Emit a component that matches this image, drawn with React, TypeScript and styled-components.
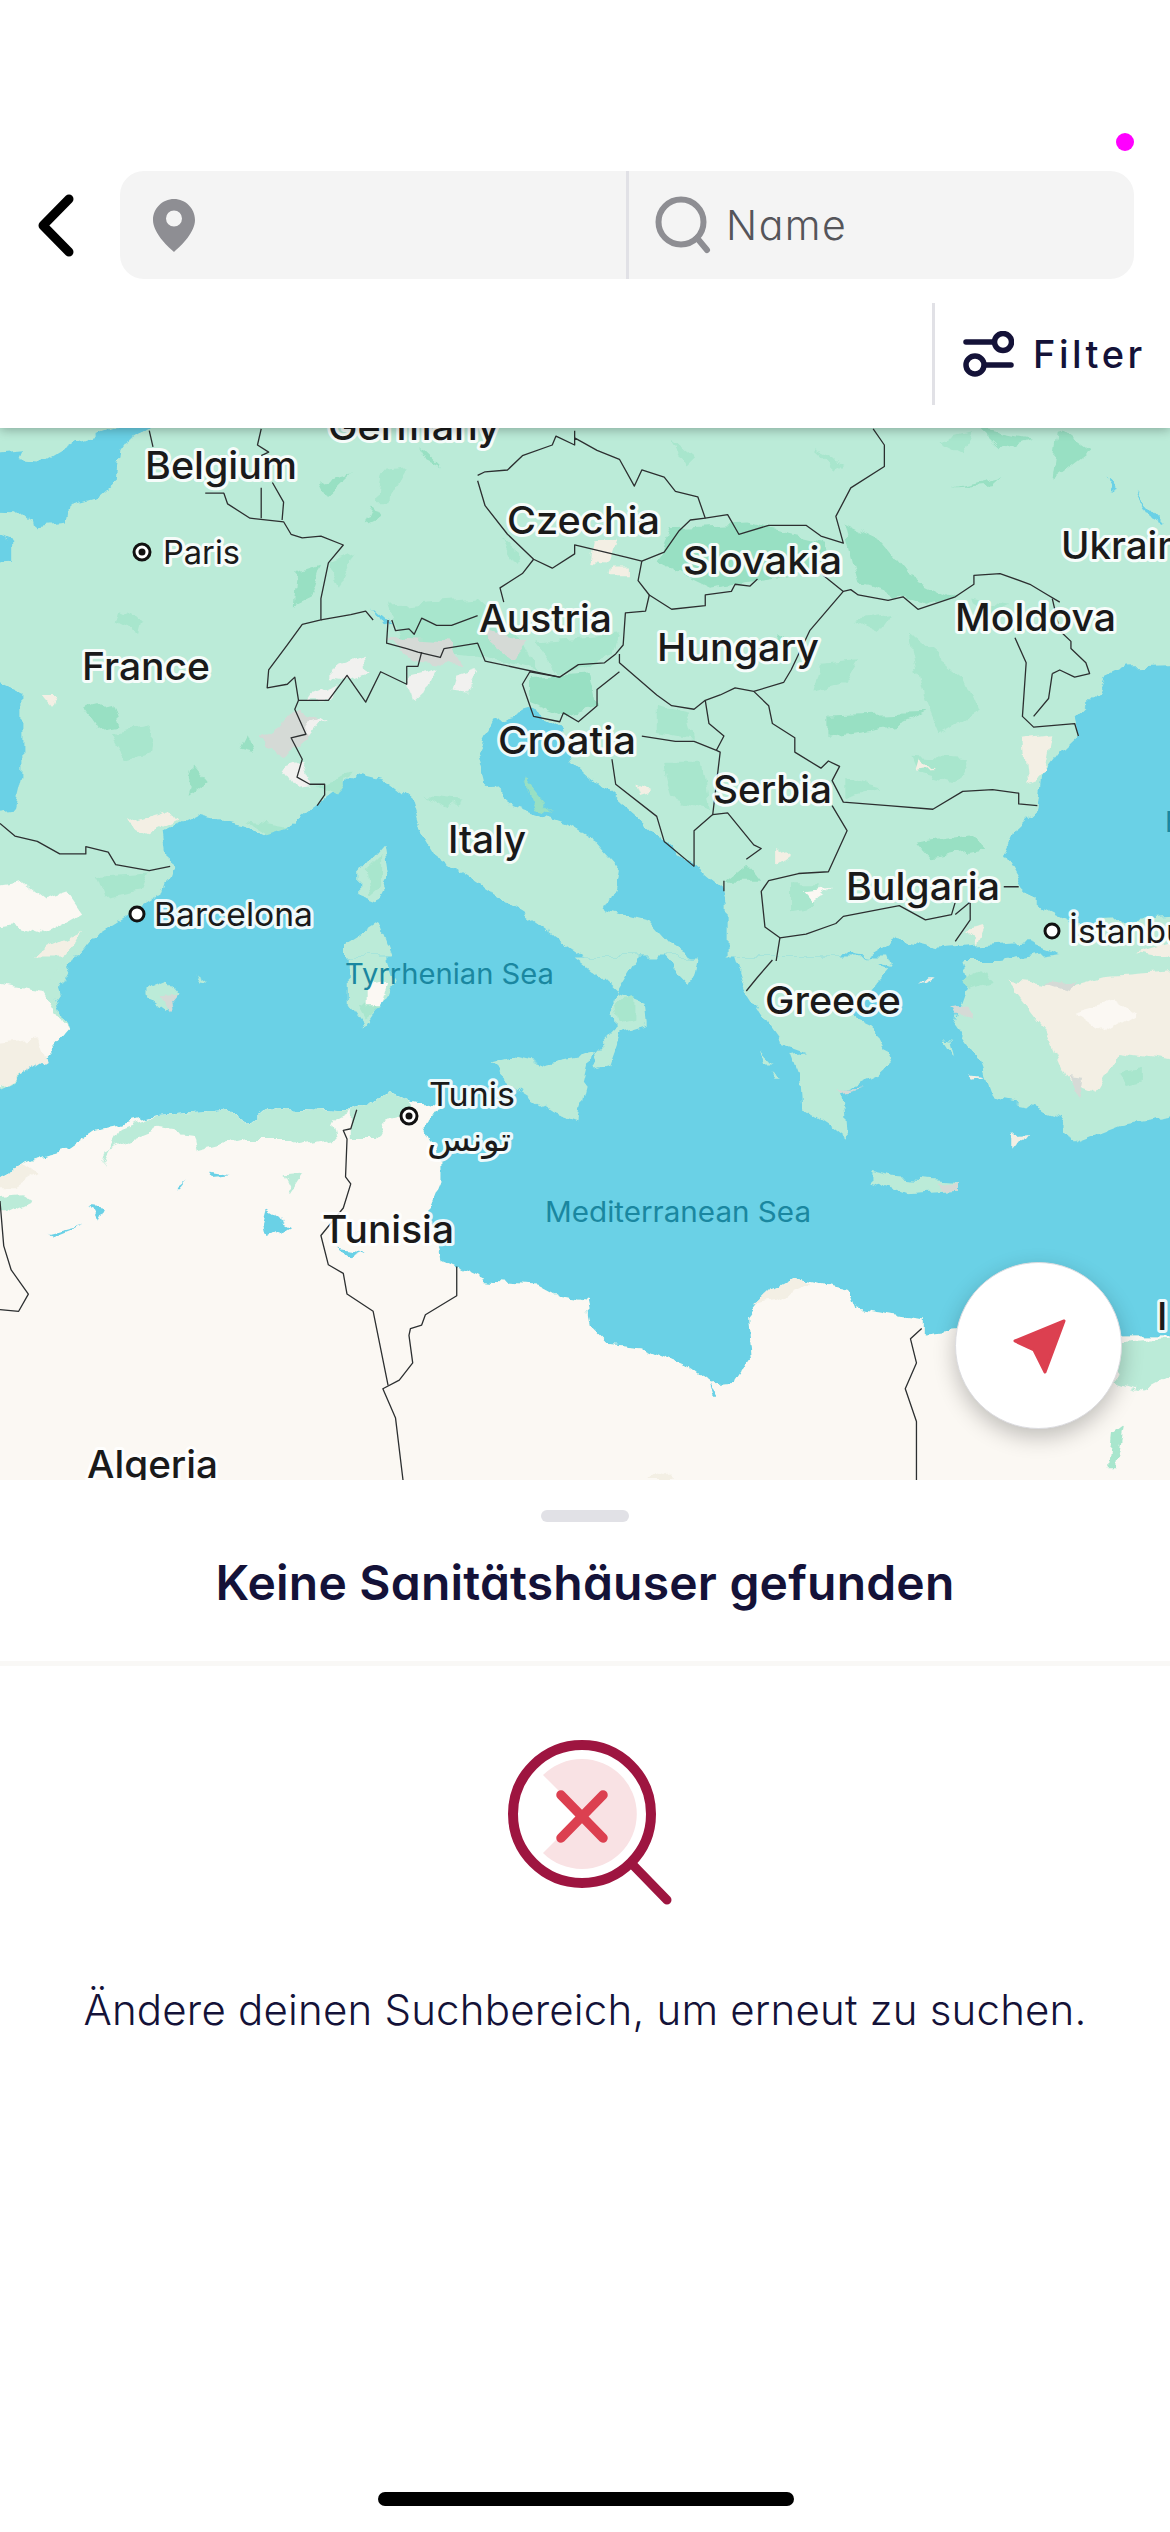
import React from "react";
import styled, { createGlobalStyle } from "styled-components";

const Global = createGlobalStyle`
  html, body { margin: 0; padding: 0; background: #fff; }
  body { font-family: "Inter", "Liberation Sans", sans-serif; }
  * { box-sizing: border-box; }
`;

const Page = styled.div`
  position: relative;
  width: 1170px;
  height: 2532px;
  overflow: hidden;
  display: flex;
  flex-direction: column;
  background: #fff;
  font-feature-settings: "cv11";
`;

const Header = styled.header`
  position: relative;
  z-index: 2;
  height: 428px;
  padding-top: 171px;
  background: #fff;
  box-shadow: 0 2px 10px rgba(0, 0, 0, 0.28);
`;

const RecordingDot = styled.span`
  position: absolute;
  top: 133px;
  right: 36px;
  width: 18px;
  height: 18px;
  border-radius: 50%;
  background: #ff00ff;
`;

const SearchRow = styled.div`
  display: flex;
  height: 108px;
  padding-right: 36px;
`;

const BackButton = styled.div`
  width: 120px;
  display: flex;
  align-items: center;
  padding-left: 36px;
`;

const SearchBar = styled.div`
  flex: 1;
  display: flex;
  border-radius: 24px;
  background: #f4f4f4;
  overflow: hidden;
`;

const LocationField = styled.div`
  width: 509px;
  display: flex;
  align-items: center;
  padding-left: 33px;
  border-right: 3px solid #e1e1e6;
`;

const NameField = styled.div`
  flex: 1;
  display: flex;
  align-items: center;
  padding-left: 26px;
  gap: 11px;
  font-size: 41px;
  font-weight: 300;
  letter-spacing: 1.5px;
  color: #55555a;
`;

const FilterRow = styled.div`
  display: flex;
  justify-content: flex-end;
  padding-top: 24px;
`;

const FilterButton = styled.div`
  width: 238px;
  height: 102px;
  display: flex;
  align-items: center;
  gap: 19px;
  padding-left: 28px;
  border-left: 3px solid #e1e1e6;
  font-size: 38px;
  font-weight: 500;
  letter-spacing: 3.5px;
  color: #141238;
`;

const MapArea = styled.main`
  position: relative;
  flex: 1;
  min-height: 0;
  background: #bbebd8;
`;

const MapSvg = styled.svg`
  display: block;
  width: 1170px;
  height: 1052px;
`;

const Sea = styled.path`
  fill: #6bd1e6;
`;

const Patch = styled.path<{ $fill: string }>`
  fill: ${(p) => p.$fill};
`;

const Border = styled.path`
  fill: none;
  stroke: #2c2f30;
  stroke-width: 1.3px;
  stroke-linejoin: round;
`;

const PlaceText = styled.text<{ $size: number; $weight: number; $teal?: boolean }>`
  font-family: "Inter", "DejaVu Sans", sans-serif;
  font-feature-settings: normal;
  font-size: ${(p) => p.$size}px;
  font-weight: ${(p) => p.$weight};
  fill: ${(p) => (p.$teal ? "#1a87a0" : "#1a1a1a")};
  stroke: ${(p) => (p.$teal ? "none" : "rgba(255,255,255,0.88)")};
  stroke-width: 6px;
  stroke-linejoin: round;
  paint-order: stroke;
`;

const LocateButton = styled.div`
  position: absolute;
  left: 955px;
  top: 834px;
  width: 167px;
  height: 167px;
  border-radius: 50%;
  display: flex;
  align-items: center;
  justify-content: center;
  background: #fff;
  border: 1px solid #dcdce0;
  box-shadow: 0 8px 22px rgba(0, 0, 0, 0.24);
`;

const Sheet = styled.section`
  position: relative;
  z-index: 1;
  height: 1052px;
  border-radius: 50px 50px 0 0;
  background: #fff;
  display: flex;
  flex-direction: column;
  align-items: center;
`;

const Handle = styled.div`
  width: 88px;
  height: 12px;
  margin-top: 30px;
  border-radius: 6px;
  background: #e1e1e6;
`;

const Title = styled.h1`
  margin: 0;
  height: 144px;
  width: 100%;
  display: flex;
  align-items: center;
  justify-content: center;
  padding-bottom: 18px;
  font-size: 48px;
  font-weight: 600;
  letter-spacing: 0.2px;
  color: #141238;
  border-bottom: 5px solid #f9f8f6;
`;

const EmptyIcon = styled.svg`
  display: block;
  margin: 64px 0 0 10px;
`;

const Message = styled.p`
  margin: 70px 0 0;
  line-height: 60px;
  font-size: 42px;
  font-weight: 300;
  letter-spacing: 0.2px;
  color: #141238;
`;

const HomeIndicator = styled.div`
  position: absolute;
  left: 378px;
  bottom: 26px;
  width: 416px;
  height: 14px;
  border-radius: 7px;
  background: #000;
`;

/* Geography traced in crop coordinates, one group per traced area. */
const NORTH = "translate(0,420) scale(0.7463,0.3571)";
const SOUTH = "translate(0,960) scale(0.7463,0.3444)";

const GREEN = "#98e0c3";
const MID = "#a8e6cd";
const LIGHT = "#bbebd8";
const SAND = "#fbf8f3";
const BEIGE = "#f3efe4";
const SNOW = "#f1f1ef";
const GREY = "#d5dad6";

const northSeas = [
  "M-30,95 L30,85 L25,110 L60,115 L100,65 L150,30 L210,10 L160,75 L155,170 L130,215 L95,235 L90,290 L50,300 L20,250 L-30,248 Z",
  "M-30,300 L15,340 L15,400 L-30,405 Z",
  "M-30,710 L30,770 L30,1000 L20,1085 L-30,1100 Z",
  "M100,1515 L130,1440 L215,1330 L228,1250 L222,1150 L265,1105 L330,1135 L355,1160 L385,1140 L430,1070 L480,990 L520,1010 L550,1060 L560,1130 L590,1230 L640,1300 L700,1380 L760,1470 L790,1515 Z",
  "M715,810 L660,845 L640,930 L650,1010 L690,1080 L760,1130 L800,1180 L830,1250 L825,1310 L812,1370 L870,1400 L900,1470 L935,1515 L975,1515 L975,1350 L970,1320 L930,1250 L880,1160 L820,1050 L770,960 L750,860 Z",
  "M1600,685 L1510,690 L1480,720 L1470,770 L1440,830 L1445,880 L1420,930 L1395,1000 L1390,1090 L1360,1150 L1345,1220 L1370,1310 L1400,1370 L1440,1410 L1600,1390 Z",
  "M1120,1515 L1130,1490 L1160,1500 L1200,1450 L1260,1480 L1380,1460 L1420,1490 L1340,1515 Z",
  "M500,525 L525,570 L515,575 Z",
  "M1520,200 L1560,290 L1540,270 Z",
  "M1480,160 L1500,200 L1490,195 Z",
];

const northPatches: [string, string][] = [
  [MID, "M520,520 L640,500 L700,620 L720,700 L640,660 L540,640 Z"],
  [GREEN, "M900,300 L1000,290 L1100,340 L1110,420 L950,470 L880,400 Z"],
  [GREEN, "M1130,290 L1180,340 L1220,440 L1280,500 L1240,520 L1150,460 Z"],
  [MID, "M1220,600 L1290,720 L1310,820 L1260,880 L1240,780 Z"],
  [GREEN, "M1110,830 L1240,820 L1200,860 L1110,890 Z"],
  [GREEN, "M710,720 L790,710 L800,800 L760,830 L710,790 Z"],
  [MID, "M720,620 L830,600 L820,660 L750,710 Z"],
  [MID, "M880,800 L920,820 L930,890 L880,870 Z"],
  [MID, "M890,960 L940,960 L950,1090 L900,1060 Z"],
  [MID, "M1100,680 L1150,670 L1130,740 L1090,760 Z"],
  [GREEN, "M560,70 L590,130 L570,110 Z"],
  [GREEN, "M500,240 L510,270 L490,290 Z"],
  [GREEN, "M430,170 L470,150 L440,210 Z"],
  [MID, "M510,150 L545,140 L520,230 L505,230 Z"],
  [MID, "M670,330 L700,380 L690,410 Z"],
  [GREEN, "M400,420 L430,400 L415,500 L395,520 Z"],
  [MID, "M440,400 L475,370 L455,470 Z"],
  [MID, "M160,530 L190,560 L185,600 L155,570 Z"],
  [GREEN, "M110,810 L150,790 L160,860 L130,870 Z"],
  [MID, "M150,880 L205,860 L200,930 L170,950 Z"],
  [GREEN, "M260,970 L275,1010 L250,1050 Z"],
  [GREEN, "M330,880 L340,930 L320,920 Z"],
  [MID, "M1090,80 L1130,120 L1120,140 Z"],
  [GREEN, "M1280,190 L1340,160 L1330,180 Z"],
  [MID, "M900,60 L930,110 L920,130 Z"],
  [MID, "M1260,60 L1300,40 L1290,90 Z"],
  [GREEN, "M1310,20 L1380,50 L1340,80 Z"],
  [GREEN, "M1420,30 L1460,90 L1410,170 Z"],
  [MID, "M1220,940 L1300,950 L1280,1020 L1230,990 Z"],
  [GREEN, "M1230,1180 L1300,1160 L1320,1200 L1250,1230 Z"],
  [MID, "M1060,1300 L1100,1300 L1090,1360 L1060,1370 Z"],
  [GREEN, "M1000,1240 L1020,1290 L970,1290 Z"],
  [MID, "M570,1050 L620,1060 L600,1090 Z"],
  [MID, "M330,1120 L390,1140 L360,1160 Z"],
  [GREEN, "M700,1000 L740,1100 L720,1090 Z"],
  [MID, "M420,1020 L470,990 L450,1050 Z"],
  [MID, "M1130,1000 L1180,1030 L1130,1060 Z"],
  [GREEN, "M1040,600 L1060,620 L1035,650 Z"],
  [MID, "M1300,500 L1350,520 L1310,560 Z"],
  [MID, "M1140,560 L1200,540 L1180,600 Z"],
  [GREY, "M350,880 L400,820 L430,840 L410,900 L380,950 L350,910 Z"],
  [GREY, "M520,610 L600,620 L620,690 L560,680 Z"],
  [GREY, "M640,590 L710,620 L690,670 Z"],
  [SNOW, "M440,700 L490,660 L495,710 L470,730 L440,720 Z"],
  [SNOW, "M545,720 L585,700 L570,760 L555,790 Z"],
  [SNOW, "M610,720 L640,700 L625,760 L605,755 Z"],
  [SNOW, "M420,770 L455,740 L440,785 L415,785 Z"],
  [SNOW, "M410,850 L435,830 L415,885 Z"],
  [SNOW, "M380,980 L405,960 L415,1020 L395,1025 Z"],
  [BEIGE, "M800,340 L825,330 L815,400 L795,395 Z"],
  [BEIGE, "M820,410 L840,410 L840,435 L818,435 Z"],
  [BEIGE, "M60,770 L78,770 L72,800 Z"],
  [BEIGE, "M170,1130 L230,1090 L240,1120 L200,1160 Z"],
  [BEIGE, "M1370,890 L1410,880 L1400,990 L1375,1010 Z"],
  [BEIGE, "M1230,950 L1250,980 L1225,985 Z"],
  [BEIGE, "M850,1020 L870,1040 L855,1050 Z"],
  [BEIGE, "M1040,1190 L1060,1220 L1040,1250 Z"],
  [SAND, "M-30,1310 L30,1290 L60,1340 L90,1320 L110,1380 L60,1440 L20,1410 L-30,1420 Z"],
  [BEIGE, "M60,1480 L110,1430 L80,1515 L40,1515 Z"],
  [MID, "M130,1280 L200,1270 L190,1320 L140,1340 Z"],
  [SAND, "M1080,1320 L1115,1310 L1090,1345 Z"],
  [BEIGE, "M1520,1490 L1600,1440 L1600,1515 Z"],
  [BEIGE, "M1290,1430 L1320,1420 L1310,1470 Z"],
];

const northBorders = [
  "M200,30 L205,75",
  "M350,25 L345,70 L360,90 L350,100",
  "M275,205 L300,205 L305,235 L335,275 L380,285 L390,320 L405,330 L430,325 L460,350 L440,400 L430,500 L430,560 L405,572 L385,630 L360,700 L358,750 L385,740 L395,720 L400,785 L395,810 L410,880 L390,890 L405,950 L398,1000 L415,1020 L435,1020 L435,1050 L425,1080",
  "M350,190 L350,275 M365,175 L380,230 L378,280",
  "M430,560 L470,545 L490,535 L500,560 M525,560 L530,590 L548,585 L555,600 L565,555 L585,575 L605,575 L640,548",
  "M520,560 L518,625 L545,640 L560,650 L590,665 L595,640 L640,625 L650,675 L750,720 L775,685 L810,680 L825,655 L835,630 L838,540 L865,535 L870,490 L900,530 L945,520 L945,490 L980,480 L985,460 L1005,465 L1015,445",
  "M1100,430 L1130,480 L1140,475 L1150,490 L1190,505 L1210,495 L1230,530 L1280,495 L1305,460 L1305,435 L1340,430 L1380,460 L1400,485 L1420,510",
  "M400,785 L440,785 L465,715 L490,790 L510,705 L545,740 L545,690 L560,690 L565,650",
  "M640,155 L650,145 L680,140 L700,100 L740,70 L745,45 L770,70 L770,30 M770,50 L800,85 L830,110 L850,185 L860,140 L890,160 L905,200 L935,215 L945,275 L925,280 L910,310 L890,370 L860,395 L840,385 L770,350 L770,375 L740,415 L715,390 L680,320 L650,240 L640,170",
  "M715,390 L700,430 L670,470 L675,510",
  "M945,275 L975,265 L990,320 L1030,295 L1080,295 L1100,325 L1130,345 L1120,270 L1140,190 L1185,130 L1185,70 L1170,25",
  "M860,395 L855,450 L870,490",
  "M830,655 L830,680 L880,770 L900,800 L930,810 L945,785 L965,770 L985,750 L1010,760 L1050,735 L1060,700 L1085,590 L1130,480",
  "M750,720 L710,705 L700,740 L710,800 L715,830 L750,845 L755,820 L775,845 L800,800 L800,755 L830,705",
  "M945,785 L950,850 L970,885 L960,925 L930,900 L905,900 L860,885",
  "M1010,760 L1030,800 L1035,850 L1065,890 L1065,930 L1100,975 L1110,955 L1125,970 L1115,1010 L1130,1070 L1190,1080 L1250,1090 L1290,1040 L1330,1035 L1365,1045 L1365,1075 L1390,1080",
  "M820,950 L825,1020 L880,1110 L890,1180 L930,1250",
  "M960,925 L965,930 L955,1105 L975,1100 L1010,1190 L1020,1200 L1000,1230",
  "M955,1105 L930,1150 L930,1250",
  "M1115,1080 L1135,1150 L1110,1265 L1070,1270 L1030,1290 L1020,1320 L1025,1420 L1045,1450 L1080,1440 L1120,1410 L1130,1390 L1205,1360 L1240,1400 L1275,1385 L1280,1350",
  "M970,1290 L970,1320 M1045,1450 L1040,1515",
  "M1345,1307 L1365,1307 M1280,1385 L1300,1350 L1300,1400 L1280,1460",
  "M1360,610 L1375,680 L1370,830 L1385,860 L1440,850 L1445,885",
  "M1410,710 L1420,700 L1440,720 L1460,710 L1455,680 L1435,640 L1435,620 L1420,590 L1410,500",
  "M1410,710 L1405,780 L1385,830",
  "M0,1130 L20,1165 L50,1180 L80,1215 L115,1215 L115,1195 L145,1210 L155,1245 L200,1262 L228,1250",
];

const southCoast =
  "L-30,660 L30,590 L65,565 L90,550 L130,490 L210,450 L300,440 L330,470 L370,430 L470,440 L520,390 L550,410 L590,430 L570,490 L590,590 L590,640 L575,720 L590,870 L610,890 L650,930 L720,940 L750,975 L785,990 L790,1060 L815,1115 L860,1125 L920,1180 L950,1230 L985,1225 L1005,1160 L1000,1040 L1030,960 L1075,925 L1135,955 L1145,1010 L1235,1040 L1235,1085 L1285,1075 L1500,1090 L1600,1090";

const southPatches: [string, string][] = [
  [SAND, "M-30,60 L60,90 L90,200 L50,300 L-30,400 Z"],
  [BEIGE, "M-30,250 L50,230 L60,290 L10,360 L-30,370 Z"],
  [LIGHT, "M-30,-10 L90,-10 L70,60 L-30,60 Z"],
  [BEIGE, "M1350,60 L1430,80 L1480,50 L1600,30 L1600,300 L1500,270 L1470,380 L1430,350 L1400,200 Z"],
  [SAND, "M1440,150 L1490,120 L1520,160 L1480,210 Z"],
  [GREY, "M1400,70 L1440,60 L1430,90 Z"],
  [GREY, "M1430,340 L1450,345 L1445,400 Z"],
  [GREY, "M1270,140 L1295,135 L1300,180 Z"],
  [MID, "M1500,330 L1530,320 L1530,350 L1510,360 Z"],
  [MID, "M1290,60 L1320,30 L1330,70 L1300,90 Z"],
];

const southLand: [string, string][] = [
  [LIGHT, "M770,-10 L800,40 L830,100 L865,130 L868,185 L830,210 L815,300 L800,310 L795,270 L825,200 L822,110 L855,-10 Z"],
  [MID, "M825,120 L850,110 L850,170 L830,180 Z"],
  [LIGHT, "M890,-10 L925,70 L930,50 L935,-10 Z"],
  [LIGHT, "M985,-10 L1000,90 L1030,190 L1045,235 L1080,262 L1060,270 L1072,340 L1075,430 L1110,480 L1135,525 L1130,380 L1180,330 L1195,300 L1170,190 L1140,160 L1190,30 L1165,-10 Z"],
  [GREY, "M1125,375 L1155,370 L1130,385 Z"],
  [LIGHT, "M1165,615 L1200,630 L1285,645 L1285,670 L1215,680 L1165,640 Z"],
  [GREY, "M1255,650 L1285,645 L1285,670 L1260,672 Z"],
  [LIGHT, "M655,300 L690,280 L730,300 L795,270 L780,400 L775,465 L740,440 L690,370 Z"],
  [LIGHT, "M470,-10 L520,-10 L530,60 L490,190 L470,130 Z"],
  [MID, "M480,130 L510,140 L490,170 Z"],
  [SAND, "M490,70 L520,60 L510,140 L490,140 Z"],
  [LIGHT, "M195,85 L225,60 L240,100 L220,140 L195,100 Z"],
  [GREY, "M215,105 L240,100 L225,140 Z"],
  [LIGHT, "M262,42 L280,72 L270,68 Z"],
  [BEIGE, "M1240,50 L1250,50 L1230,70 Z"],
  [LIGHT, "M1265,230 L1280,280 L1275,235 Z"],
  [LIGHT, "M1020,260 L1035,295 L1025,295 Z"],
  [LIGHT, "M1030,320 L1045,345 L1035,345 Z"],
  [BEIGE, "M1355,510 L1375,505 L1355,560 Z"],
  [BEIGE, "M1300,335 L1320,340 L1305,348 Z"],
  [LIGHT, "M1150,-10 L1190,-10 L1195,20 Z"],
];

const southAfrica: [string, string][] = [
  [LIGHT, "M135,590 L140,550 L210,490 L260,505 L265,555 L330,520 L390,520 L400,540 L450,520 L445,470 L470,440 L370,430 L330,470 L300,440 L210,450 L160,490 Z"],
  [LIGHT, "M470,440 L520,390 L550,410 L555,440 L520,460 L505,520 L470,520 Z"],
  [LIGHT, "M1480,1115 L1600,1090 L1600,1170 L1530,1250 L1500,1230 Z"],
  [LIGHT, "M-30,690 L30,680 L45,700 L10,735 L-30,735 Z"],
  [LIGHT, "M380,625 L405,620 L390,670 Z"],
  [MID, "M1490,1380 L1505,1355 L1495,1470 L1485,1470 Z"],
  [BEIGE, "M1010,1000 L1030,960 L1075,925 L1090,940 L1040,990 Z"],
  [BEIGE, "M870,1510 L890,1480 L905,1510 Z"],
  [BEIGE, "M-30,660 L30,590 L50,620 L20,660 Z"],
];

const southLakes = [
  "M360,730 L390,770 L360,810 L355,770 Z",
  "M280,615 L310,625 L285,630 Z",
  "M120,720 L138,725 L130,760 Z",
  "M65,790 L110,765 L70,800 Z",
  "M450,830 L490,840 L470,860 Z",
  "M240,660 L252,640 L245,660 Z",
  "M950,1230 L962,1265 L955,1265 Z",
];

const southBorders = [
  "M478,435 L470,490 L460,495 L465,520 L463,630 L470,650 L460,720 L430,800 L440,885 L460,910 L465,970 L500,1020 L520,1235",
  "M612,890 L612,975 L570,1030 L565,1060 L550,1070 L548,1090 L553,1170 L535,1220 L513,1245 L530,1330 L540,1510",
  "M1235,1070 L1220,1100 L1228,1170 L1213,1245 L1228,1340 L1228,1510",
  "M0,700 L5,830 L15,900 L38,970 L25,1020 L0,1015",
  "M1035,0 L1015,50 L1000,90",
];

type Place = { t: string; x: number; y: number; w?: number; s: number; m?: number; teal?: boolean };

const places: Place[] = [
  { t: "Germany", x: 328, y: 440, w: 172, s: 38, m: 500 },
  { t: "Belgium", x: 145, y: 479, w: 152, s: 38, m: 500 },
  { t: "Paris", x: 163, y: 564, w: 77, s: 33, m: 400 },
  { t: "Czechia", x: 507, y: 534, w: 153, s: 38, m: 500 },
  { t: "Slovakia", x: 683, y: 574, w: 159, s: 38, m: 500 },
  { t: "Ukraine", x: 1061, y: 559, w: 142, s: 38, m: 500 },
  { t: "Austria", x: 479, y: 632, w: 133, s: 38, m: 500 },
  { t: "Moldova", x: 955, y: 631, w: 161, s: 38, m: 500 },
  { t: "Hungary", x: 657, y: 661, w: 162, s: 38, m: 500 },
  { t: "France", x: 82, y: 680, w: 128, s: 38, m: 500 },
  { t: "Croatia", x: 498, y: 754, w: 138, s: 38, m: 500 },
  { t: "Serbia", x: 713, y: 803, w: 119, s: 38, m: 500 },
  { t: "Italy", x: 448, y: 853, w: 78, s: 38, m: 500 },
  { t: "Bulgaria", x: 846, y: 900, w: 154, s: 38, m: 500 },
  { t: "Barcelona", x: 154, y: 926, w: 159, s: 33, m: 400 },
  { t: "İstanbul", x: 1069, y: 943, w: 125, s: 33, m: 400 },
  { t: "Tyrrhenian Sea", x: 345, y: 984, w: 209, s: 28, teal: true },
  { t: "Greece", x: 765, y: 1014, w: 136, s: 38, m: 500 },
  { t: "Tunis", x: 429, y: 1106, w: 86, s: 33, m: 400 },
  { t: "تونس", x: 427, y: 1151, w: 84, s: 33, m: 400 },
  { t: "Mediterranean Sea", x: 545, y: 1222, w: 266, s: 28, teal: true },
  { t: "Tunisia", x: 322, y: 1243, w: 132, s: 38, m: 500 },
  { t: "Algeria", x: 87, y: 1478, w: 131, s: 38, m: 500 },
  { t: "I", x: 1157, y: 1330, s: 38, m: 500 },
  { t: "B", x: 1165, y: 832, s: 28, teal: true },
];

const cities: [number, number, boolean][] = [
  [142, 552, true],
  [137, 914, false],
  [1052, 931, false],
  [409, 1116, true],
];

function Geography() {
  return (
    <MapSvg viewBox="0 428 1170 1052">
      <defs>
        <filter id="coast" filterUnits="userSpaceOnUse" x="-30" y="400" width="1230" height="1110">
          <feTurbulence type="fractalNoise" baseFrequency="0.05" numOctaves="3" seed="7" result="noise" />
          <feDisplacementMap in="SourceGraphic" in2="noise" scale="14" xChannelSelector="R" yChannelSelector="G" />
        </filter>
      </defs>
      <g filter="url(#coast)">
        <g transform={NORTH}>
          {northSeas.map((d) => (
            <Sea key={d} d={d} />
          ))}
          {northPatches.map(([c, d]) => (
            <Patch key={d} $fill={c} d={d} />
          ))}
          <Patch $fill={LIGHT} d="M480,1270 L515,1185 L522,1280 L505,1350 L480,1330 Z" />
          <Patch $fill={MID} d="M490,1260 L512,1215 L512,1300 L495,1330 Z" />
          <Patch $fill={LIGHT} d="M465,1470 L510,1410 L530,1515 L465,1515 Z" />
        </g>
        <g transform={SOUTH}>
          <Sea d={`M100,-10 L75,90 L90,200 L50,300 L20,350 L-30,400 ${southCoast} L1600,445 L1500,480 L1440,530 L1420,450 L1380,420 L1330,400 L1310,280 L1280,190 L1300,70 L1290,-10 Z`} />
          <Patch $fill={SAND} d={`M-30,660 ${southCoast} L1600,1620 L-30,1620 Z`} />
          {southAfrica.map(([c, d]) => (
            <Patch key={d} $fill={c} d={d} />
          ))}
          {southPatches.map(([c, d]) => (
            <Patch key={d} $fill={c} d={d} />
          ))}
          {southLand.map(([c, d]) => (
            <Patch key={d} $fill={c} d={d} />
          ))}
          {southLakes.map((d) => (
            <Sea key={d} d={d} />
          ))}
        </g>
      </g>
      <g transform={NORTH}>
        {northBorders.map((d) => (
          <Border key={d} d={d} vectorEffect="non-scaling-stroke" />
        ))}
      </g>
      <g transform={SOUTH}>
        {southBorders.map((d) => (
          <Border key={d} d={d} vectorEffect="non-scaling-stroke" />
        ))}
      </g>
      {cities.map(([x, y, major]) => (
        <g key={x}>
          <circle cx={x} cy={y} r={major ? 8 : 7} fill="#fff" stroke="#111" strokeWidth={3} />
          {major && <circle cx={x} cy={y} r={3.5} fill="#111" />}
        </g>
      ))}
      {places.map((p) => (
        <PlaceText
          key={p.t}
          x={p.x}
          y={p.y}
          $size={p.s}
          $weight={p.m ?? 400}
          $teal={p.teal}
          textLength={p.w}
          lengthAdjust={p.w ? "spacingAndGlyphs" : undefined}
        >
          {p.t}
        </PlaceText>
      ))}
    </MapSvg>
  );
}

export default function App() {
  return (
    <Page>
      <Global />
      <Header>
        <RecordingDot />
        <SearchRow>
          <BackButton>
            <svg width="40" height="66" viewBox="36 191 40 66" fill="none">
              <polyline points="69,198 43,224.5 69,251" stroke="#000" strokeWidth="9" strokeLinecap="round" strokeLinejoin="round" />
            </svg>
          </BackButton>
          <SearchBar>
            <LocationField>
              <svg width="42" height="53" viewBox="0 0 42 53">
                <path
                  fillRule="evenodd"
                  fill="#8e8e93"
                  d="M21 0C9.4 0 0 9.4 0 21c0 12 13 25 21 32 8-7 21-20 21-32C42 9.4 32.6 0 21 0zm0 11.500a8 8 0 1 1 0 16 8 8 0 0 1 0-16z"
                />
              </svg>
            </LocationField>
            <NameField>
              <svg width="60" height="60" viewBox="655 195 60 60" fill="none" stroke="#8e8e93" strokeWidth="6" strokeLinecap="round">
                <circle cx="681" cy="222" r="22.5" />
                <line x1="697" y1="238" x2="707" y2="250" />
              </svg>
              Name
            </NameField>
          </SearchBar>
        </SearchRow>
        <FilterRow>
          <FilterButton>
            <svg width="51" height="46" viewBox="0 0 51 46" fill="none" stroke="#141238" strokeWidth="5.500" strokeLinecap="round">
              <line x1="3" y1="11" x2="30" y2="11" />
              <circle cx="40" cy="11" r="8.500" />
              <circle cx="12" cy="34" r="9" />
              <line x1="22" y1="34" x2="48" y2="34" />
            </svg>
            Filter
          </FilterButton>
        </FilterRow>
      </Header>
      <MapArea>
        <Geography />
        <LocateButton>
          <svg width="56" height="56" viewBox="1011 1318 56 56">
            <path
              fill="#dc4050"
              stroke="#dc4050"
              strokeWidth="3"
              strokeLinejoin="round"
              d="M1064 1321 L1015 1341 L1034 1350 L1045 1372 Z"
            />
          </svg>
        </LocateButton>
      </MapArea>
      <Sheet>
        <Handle />
        <Title>Keine Sanitätshäuser gefunden</Title>
        <EmptyIcon width="180" height="180" viewBox="0 0 180 180" fill="none">
          <path d="M82 84 L43 45 A55 55 0 1 1 43 123 Z" fill="#f9e2e4" />
          <circle cx="82" cy="84" r="69" stroke="#9e1540" strokeWidth="10" />
          <line x1="132" y1="134" x2="167" y2="170" stroke="#9e1540" strokeWidth="9" strokeLinecap="round" />
          <line x1="61" y1="65" x2="103" y2="108" stroke="#dc4050" strokeWidth="9.500" strokeLinecap="round" />
          <line x1="103" y1="65" x2="61" y2="108" stroke="#dc4050" strokeWidth="9.500" strokeLinecap="round" />
        </EmptyIcon>
        <Message>Ändere deinen Suchbereich, um erneut zu suchen.</Message>
        <HomeIndicator />
      </Sheet>
    </Page>
  );
}
